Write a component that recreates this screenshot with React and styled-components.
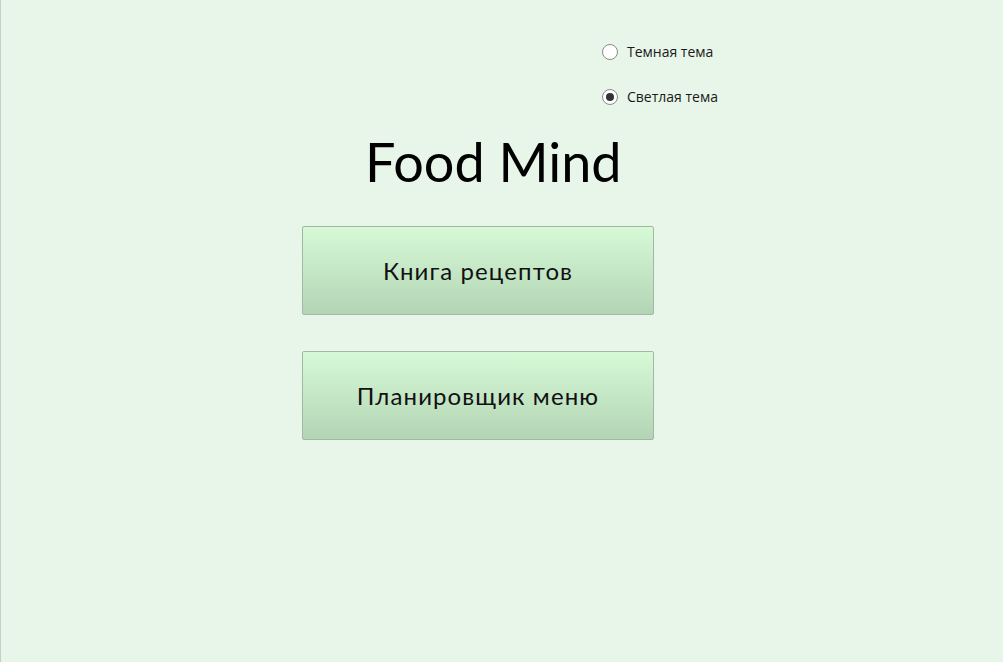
import React, { useState } from "react";
import styled, { createGlobalStyle } from "styled-components";

const Global = createGlobalStyle`
  html, body {
    margin: 0;
    padding: 0;
    background: #e8f5e9;
  }
`;

const Page = styled.div`
  width: 1003px;
  height: 662px;
  box-sizing: border-box;
  border-left: 1px solid #c8cfc8;
  background: #e8f5e9;
  display: flex;
  flex-direction: column;
  overflow: hidden;
`;

const ThemeGroup = styled.div`
  display: flex;
  flex-direction: column;
  gap: 28px;
  margin: 43px 0 0 601px;
`;

const RadioRow = styled.label`
  display: flex;
  align-items: center;
  gap: 9px;
  height: 17px;
  font-family: "Open Sans", "Noto Sans", sans-serif;
  font-size: 14px;
  color: #1a1a1a;
  cursor: pointer;
`;

const Dot = styled.span`
  width: 16px;
  height: 16px;
  box-sizing: border-box;
  border-radius: 50%;
  border: 1px solid #8a8a8a;
  background: #ffffff;
  display: flex;
  align-items: center;
  justify-content: center;

  &::after {
    content: "";
    width: 8px;
    height: 8px;
    border-radius: 50%;
    background: ${(p) => (p.checked ? "#333333" : "transparent")};
  }
`;

const Title = styled.h1`
  margin: 27px 0 0 364px;
  font-family: "Lato", "DejaVu Sans", sans-serif;
  font-weight: 400;
  font-size: 54px;
  line-height: 60px;
  color: #000;
`;

const Menu = styled.div`
  display: flex;
  flex-direction: column;
  gap: 36px;
  margin: 34px 0 0 301px;
`;

const MenuButton = styled.button`
  width: 352px;
  height: 89px;
  box-sizing: border-box;
  border: 1px solid #a3b8a4;
  border-radius: 2px;
  background: linear-gradient(#d6f9d6, #b3d5b5);
  font-family: "Lato", "DejaVu Sans", sans-serif;
  font-size: 24px;
  letter-spacing: 1.1px;
  color: #111;
  cursor: pointer;
`;

export default function App() {
  const [theme, setTheme] = useState("light");

  return (
    <>
      <Global />
      <Page>
        <ThemeGroup>
          <RadioRow onClick={() => setTheme("dark")}>
            <Dot checked={theme === "dark"} />
            Темная тема
          </RadioRow>
          <RadioRow onClick={() => setTheme("light")}>
            <Dot checked={theme === "light"} />
            Светлая тема
          </RadioRow>
        </ThemeGroup>
        <Title>Food Mind</Title>
        <Menu>
          <MenuButton>Книга рецептов</MenuButton>
          <MenuButton>Планировщик меню</MenuButton>
        </Menu>
      </Page>
    </>
  );
}
